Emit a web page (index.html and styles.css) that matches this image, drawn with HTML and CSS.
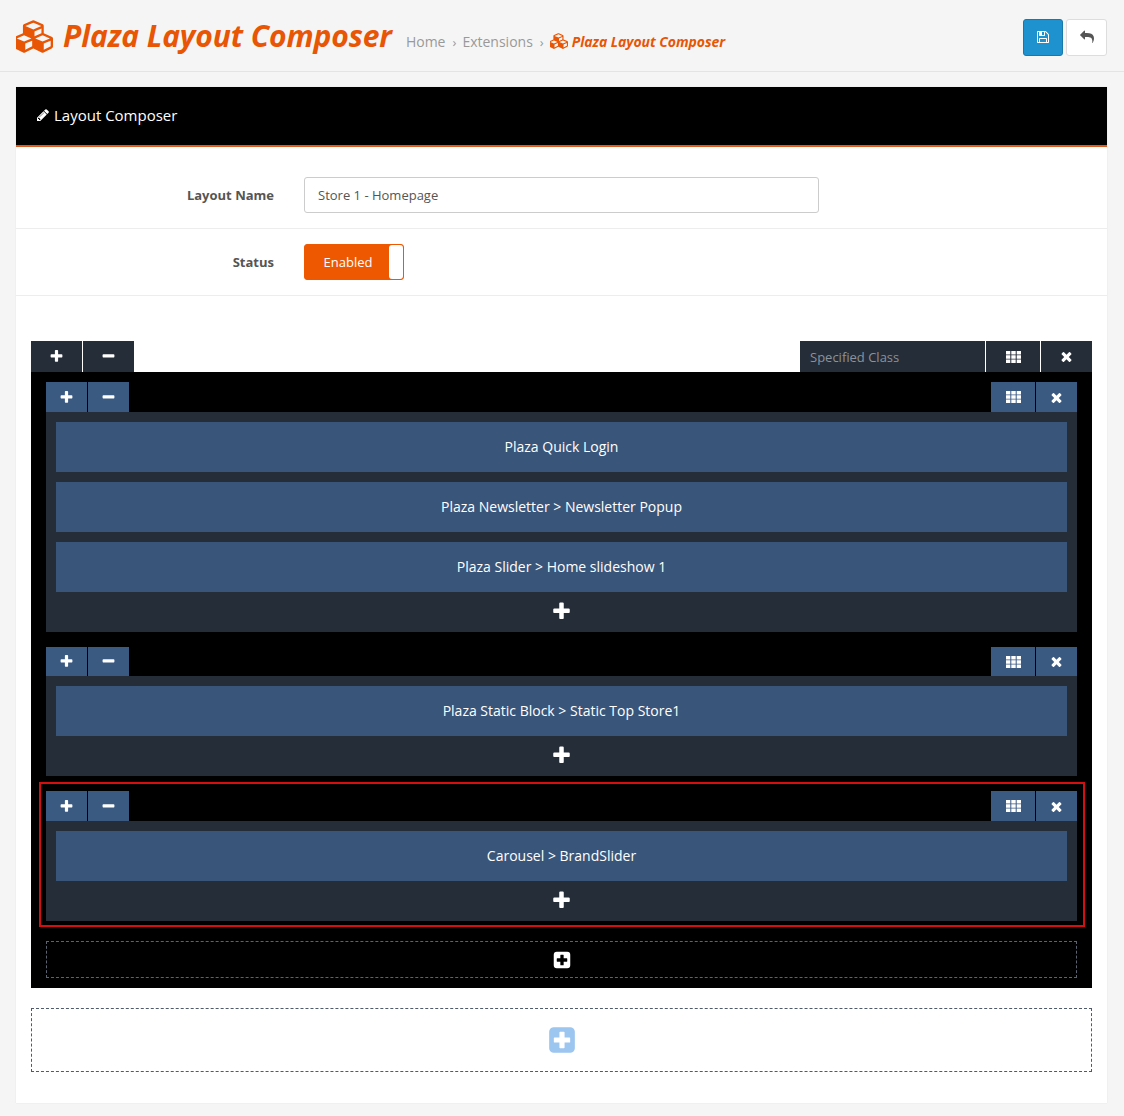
FILE: index.html
```html
<!DOCTYPE html>
<html lang="en">

<head>
    <meta charset="UTF-8">
    <meta name="viewport" content="width=device-width, initial-scale=1.0">
    <title>Plaza Layout Composer</title>
    <link rel="stylesheet" href="styles.css">
</head>

<body>
    <svg class="defs" width="0" height="0">
        <symbol id="i-plus" viewBox="0 0 1792 1792"><path d="M1600 736v192q0 40-28 68t-68 28h-416v416q0 40-28 68t-68 28h-192q-40 0-68-28t-28-68v-416h-416q-40 0-68-28t-28-68v-192q0-40 28-68t68-28h416v-416q0-40 28-68t68-28h192q40 0 68 28t28 68v416h416q40 0 68 28t28 68z"/></symbol>
        <symbol id="i-minus" viewBox="0 0 1792 1792"><path d="M1600 736v192q0 40-28 68t-68 28h-1216q-40 0-68-28t-28-68v-192q0-40 28-68t68-28h1216q40 0 68 28t28 68z"/></symbol>
        <symbol id="i-times" viewBox="0 0 1792 1792"><path d="M1490 1322q0 40-28 68l-136 136q-28 28-68 28t-68-28l-294-294-294 294q-28 28-68 28t-68-28l-136-136q-28-28-28-68t28-68l294-294-294-294q-28-28-28-68t28-68l136-136q28-28 68-28t68 28l294 294 294-294q28-28 68-28t68 28l136 136q28 28 28 68t-28 68l-294 294 294 294q28 28 28 68z"/></symbol>
        <symbol id="i-th" viewBox="0 0 15 12"><path d="M0 0h4.300v3.500H0zM5.300 0h4.400v3.500H5.300zM10.700 0H15v3.500h-4.300zM0 4.300h4.300v3.400H0zM5.300 4.300h4.400v3.400H5.300zM10.700 4.300H15v3.400h-4.300zM0 8.500h4.300V12H0zM5.300 8.500h4.400V12H5.300zM10.700 8.500H15V12h-4.300z"/></symbol>
        <symbol id="i-pencil" viewBox="0 0 1792 1792"><path d="M491 1536l91-91-235-235-91 91v107h128v128h107zm523-928q0-22-22-22-10 0-17 7l-542 542q-7 7-7 17 0 22 22 22 10 0 17-7l542-542q7-7 7-17zm-54-192l416 416-832 832h-416v-416zm683 96q0 53-37 90l-166 166-416-416 166-165q36-38 90-38 53 0 91 38l235 234q37 39 37 91z"/></symbol>
        <symbol id="i-save" viewBox="0 0 1792 1792"><path d="M512 1536h768v-384h-768v384zm896 0h128v-896q0-14-10-38.500t-20-34.500l-281-281q-10-10-34-20t-39-10v416q0 40-28 68t-68 28h-576q-40 0-68-28t-28-68v-416h-128v1280h128v-416q0-40 28-68t68-28h832q40 0 68 28t28 68v416zm-384-928v-320q0-13-9.500-22.500t-22.500-9.500h-192q-13 0-22.500 9.500t-9.500 22.500v320q0 13 9.500 22.500t22.500 9.500h192q13 0 22.500-9.500t9.500-22.500zm640 32v928q0 40-28 68t-68 28h-1344q-40 0-68-28t-28-68v-1344q0-40 28-68t68-28h928q40 0 88 20t76 48l280 280q28 28 48 76t20 88z"/></symbol>
        <symbol id="i-reply" viewBox="0 0 1792 1792"><path d="M1792 1120q0 166-127 451-3 7-10.500 24t-13.500 30-13 22q-12 17-28 17-15 0-23.500-10t-8.500-25q0-9 2.500-26.500t2.500-23.500q5-68 5-123 0-101-17.500-181t-48.500-138.500-80-101-105.500-69.500-133-42.500-154-21.500-175.500-6h-224v256q0 26-19 45t-45 19-45-19l-512-512q-19-19-19-45t19-45l512-512q19-19 45-19t45 19 19 45v256h224q713 0 875 403 53 134 53 333z"/></symbol>
        <symbol id="i-cubes" viewBox="0 0 2048 1792"><path d="M512 1632l384-192v-314l-384 164v342zm-64-454l404-173-404-173-404 173zm1088 454l384-192v-314l-384 164v342zm-64-454l404-173-404-173-404 173zm-448-293l384-165v-266l-384 164v267zm-64-379l441-189-441-189-441 189zm1088 518v416q0 36-19 67t-52 47l-448 224q-25 14-57 14t-57-14l-448-224q-4-2-7-4-2 2-7 4l-448 224q-25 14-57 14t-57-14l-448-224q-33-16-52-47t-19-67v-416q0-38 21.500-70t56.500-48l434-186v-400q0-38 21.500-70t56.500-48l448-192q23-10 50-10t50 10l448 192q35 16 56.500 48t21.500 70v400l434 186q36 16 57 48t21 70z"/></symbol>
        <symbol id="i-plus-square" viewBox="0 0 24 24"><path fill-rule="evenodd" d="M5 1h14a4 4 0 0 1 4 4v14a4 4 0 0 1-4 4H5a4 4 0 0 1-4-4V5a4 4 0 0 1 4-4zm5.300 4a.5.5 0 0 0-.5.5v4.300H5.500a.5.5 0 0 0-.5.5v3.400a.5.5 0 0 0 .5.5h4.300v4.300a.5.5 0 0 0 .5.5h3.400a.5.5 0 0 0 .5-.5v-4.300h4.300a.5.5 0 0 0 .5-.5v-3.400a.5.5 0 0 0-.5-.5h-4.300V5.500a.5.5 0 0 0-.5-.5z"/></symbol>
    </svg>

    <header class="page-header">
        <svg class="logo"><use href="#i-cubes"/></svg>
        <h1>Plaza Layout Composer</h1>
        <ul class="breadcrumb">
            <li><a>Home</a></li>
            <li class="sep">›</li>
            <li><a>Extensions</a></li>
            <li class="sep">›</li>
            <li class="current"><svg><use href="#i-cubes"/></svg>Plaza Layout Composer</li>
        </ul>
        <div class="actions">
            <a class="btn btn-save"><svg><use href="#i-save"/></svg></a>
            <a class="btn btn-back"><svg><use href="#i-reply"/></svg></a>
        </div>
    </header>

    <main class="panel">
        <div class="panel-heading"><svg><use href="#i-pencil"/></svg>Layout Composer</div>

        <div class="form-row first">
            <label>Layout Name</label>
            <input type="text" value="Store 1 - Homepage">
        </div>
        <div class="form-row">
            <label>Status</label>
            <div class="switch"><span>Enabled</span><i></i></div>
        </div>

        <div class="composer">
            <div class="main-bar">
                <div class="tools">
                    <a><svg><use href="#i-plus"/></svg></a>
                    <a><svg><use href="#i-minus"/></svg></a>
                </div>
                <div class="tools">
                    <input type="text" class="class-input" placeholder="Specified Class">
                    <a><svg class="th"><use href="#i-th"/></svg></a>
                    <a><svg class="x"><use href="#i-times"/></svg></a>
                </div>
            </div>

            <div class="main-body">
                <section class="column col-a">
                    <div class="col-bar">
                        <div class="tools">
                            <a><svg><use href="#i-plus"/></svg></a>
                            <a><svg><use href="#i-minus"/></svg></a>
                        </div>
                        <div class="tools">
                            <a><svg class="th"><use href="#i-th"/></svg></a>
                            <a><svg class="x"><use href="#i-times"/></svg></a>
                        </div>
                    </div>
                    <div class="col-body">
                        <div class="module">Plaza Quick Login</div>
                        <div class="module">Plaza Newsletter &gt; Newsletter Popup</div>
                        <div class="module">Plaza Slider &gt; Home slideshow 1</div>
                        <div class="add-module"><svg><use href="#i-plus"/></svg></div>
                    </div>
                </section>

                <section class="column col-b">
                    <div class="col-bar">
                        <div class="tools">
                            <a><svg><use href="#i-plus"/></svg></a>
                            <a><svg><use href="#i-minus"/></svg></a>
                        </div>
                        <div class="tools">
                            <a><svg class="th"><use href="#i-th"/></svg></a>
                            <a><svg class="x"><use href="#i-times"/></svg></a>
                        </div>
                    </div>
                    <div class="col-body">
                        <div class="module">Plaza Static Block &gt; Static Top Store1</div>
                        <div class="add-module"><svg><use href="#i-plus"/></svg></div>
                    </div>
                </section>

                <section class="column col-c selected">
                    <div class="col-bar">
                        <div class="tools">
                            <a><svg><use href="#i-plus"/></svg></a>
                            <a><svg><use href="#i-minus"/></svg></a>
                        </div>
                        <div class="tools">
                            <a><svg class="th"><use href="#i-th"/></svg></a>
                            <a><svg class="x"><use href="#i-times"/></svg></a>
                        </div>
                    </div>
                    <div class="col-body">
                        <div class="module">Carousel &gt; BrandSlider</div>
                        <div class="add-module"><svg><use href="#i-plus"/></svg></div>
                    </div>
                </section>

                <div class="add-column"><svg><use href="#i-plus-square"/></svg></div>
            </div>

            <div class="add-row"><svg><use href="#i-plus-square"/></svg></div>
        </div>
    </main>
</body>

</html>
```
FILE: styles.css
```css
* {
    box-sizing: border-box;
}

body {
    margin: 0;
    background: #f5f5f5;
    font-family: "Open Sans", sans-serif;
    font-size: 13px;
    color: #555;
}

svg {
    fill: currentColor;
    display: block;
}

.defs {
    position: absolute;
}

.page-header {
    display: flex;
    align-items: center;
    height: 72px;
    padding: 0 17px 0 16px;
    border-bottom: 1px solid #e4e4e4;
}

.logo {
    width: 37px;
    height: 33px;
    color: #e85504;
    margin-top: 1px;
}

.page-header h1 {
    margin: 0 14px 0 10px;
    font-size: 30px;
    font-weight: 700;
    font-style: italic;
    letter-spacing: -0.1px;
    line-height: 72px;
    color: #e85504;
    white-space: nowrap;
}

.breadcrumb {
    display: flex;
    align-items: center;
    list-style: none;
    margin: 11px 0 0;
    padding: 0;
    font-size: 14px;
    color: #999;
}

.breadcrumb .sep {
    margin: 1px 6px 0 7px;
    font-size: 13px;
}

.breadcrumb .sep:nth-child(4) {
    margin-right: 5px;
}

.breadcrumb .current {
    display: flex;
    align-items: center;
    margin-left: 1px;
    color: #e85504;
    font-weight: 700;
    font-style: italic;
    letter-spacing: -0.05px;
}

.breadcrumb .current svg {
    width: 18px;
    height: 16px;
    margin-right: 4px;
}

.actions {
    display: flex;
    gap: 3px;
    margin-left: auto;
    margin-top: 3px;
}

.btn {
    display: flex;
    align-items: center;
    justify-content: center;
    height: 37px;
    width: 40px;
    border-radius: 3px;
}

.btn svg {
    width: 14px;
    height: 14px;
}

.btn-save {
    background: #1e91cf;
    border: 1px solid #1978ab;
    color: #fff;
}

.btn-back {
    width: 41px;
    background: #fff;
    border: 1px solid #ddd;
    color: #555;
}

.panel {
    margin: 15px 17px 13px 16px;
    background: #fff;
    box-shadow: 0 0 1px rgba(0, 0, 0, 0.12);
}

.panel-heading {
    display: flex;
    align-items: center;
    gap: 4px;
    height: 60px;
    padding: 0 0 2px 20px;
    background: #000;
    border-bottom: 2px solid #e0591f;
    color: #fff;
    font-size: 15px;
}

.panel-heading svg {
    width: 14px;
    height: 14px;
}

.form-row {
    display: flex;
    align-items: center;
    padding: 15px 0;
    border-bottom: 1px solid #ededed;
}

.form-row.first {
    padding-top: 30px;
}

.form-row label {
    width: 258px;
    margin-right: 30px;
    text-align: right;
    font-weight: 700;
    color: #555;
}

.form-row input {
    width: 515px;
    height: 36px;
    padding: 0 13px;
    border: 1px solid #ccc;
    border-radius: 3px;
    font: 13px "Open Sans", sans-serif;
    color: #555;
}

.switch {
    display: flex;
    width: 100px;
    height: 36px;
    background: #ee5800;
    border: 1px solid #ee5800;
    border-radius: 3px;
    color: #fff;
}

.switch span {
    width: 86px;
    line-height: 34px;
    text-align: center;
}

.switch i {
    width: 14px;
    margin-left: -2px;
    background: #fff;
    border-radius: 3px;
}

.composer {
    padding: 45px 15px 31px;
}

.main-bar,
.col-bar {
    display: flex;
    justify-content: space-between;
}

.tools {
    display: flex;
    gap: 1px;
}

.tools a {
    display: flex;
    align-items: center;
    justify-content: center;
    color: #fff;
}

.tools svg {
    width: 15px;
    height: 15px;
}

.tools svg.th {
    width: 15px;
    height: 12px;
}

.main-bar {
    height: 31px;
}

.main-bar a {
    width: 51px;
    background: #252d38;
}

.main-bar .tools:last-child a:nth-child(2) {
    width: 54px;
}

.class-input {
    width: 185px;
    padding: 0 10px;
    border: 0;
    background: #252d38;
    font: 13px "Open Sans", sans-serif;
}

.class-input::placeholder {
    color: #8b929b;
    opacity: 1;
}

.main-body {
    padding: 10px 15px;
    background: #000;
}

.col-bar {
    height: 30px;
}

.col-b .col-bar {
    height: 29px;
}

.col-bar a {
    width: 41px;
    background: #3b5a82;
}

.col-bar .tools:last-child a:first-child {
    width: 44px;
}

.col-body {
    display: flex;
    flex-direction: column;
    gap: 10px;
    padding: 10px 10px 0;
    background: #252d38;
}

.module {
    height: 50px;
    line-height: 50px;
    text-align: center;
    background: #39557a;
    color: #fff;
    font-size: 14px;
}

.add-module {
    display: flex;
    align-items: center;
    justify-content: center;
    height: 40px;
    margin-top: -10px;
    padding-bottom: 1px;
    color: #fff;
}

.add-module svg {
    width: 21px;
    height: 21px;
}

.col-b,
.col-c {
    margin-top: 15px;
}

.selected {
    position: relative;
}

/* red frame does not sit evenly round the column */
.selected::after {
    content: "";
    position: absolute;
    inset: -9px -8px -6px -7px;
    border: 2px solid #d40f0f;
    pointer-events: none;
}

.add-column {
    display: flex;
    align-items: center;
    justify-content: center;
    height: 37px;
    margin-top: 20px;
    border: 1px dashed #5b6470;
    color: #fff;
}

.add-column svg {
    width: 18px;
    height: 18px;
}

.add-row {
    display: flex;
    align-items: center;
    justify-content: center;
    height: 64px;
    margin-top: 20px;
    border: 1px dashed #4f5b6b;
    color: #9cc5f0;
}

.add-row svg {
    width: 28px;
    height: 28px;
}
```
